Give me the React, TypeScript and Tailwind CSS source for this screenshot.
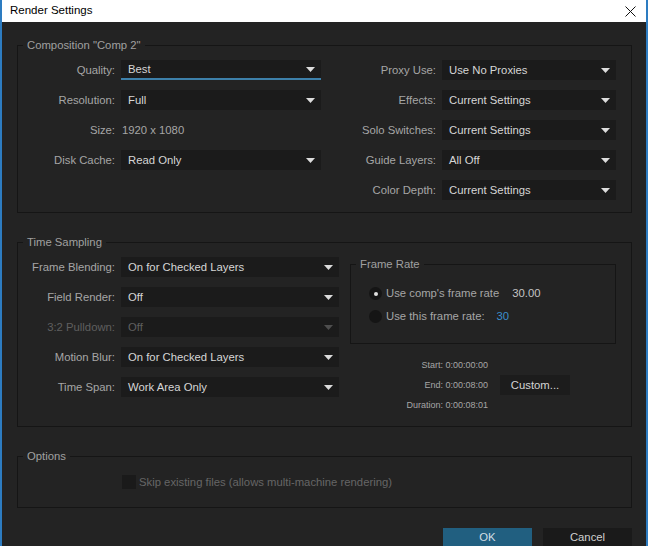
import React from 'react';

const FONT = { fontFamily: '"Liberation Sans", Arial, sans-serif' };

function Arrow({ dim }: { dim?: boolean }) {
  return (
    <svg width="9" height="5" viewBox="0 0 9 5" className="shrink-0">
      <path d="M0 0 H9 L4.5 5 Z" fill={dim ? '#4e4e4e' : '#dcdcdc'} />
    </svg>
  );
}

function Select({
  value,
  width,
  focused,
  disabled,
}: {
  value: string;
  width: string;
  focused?: boolean;
  disabled?: boolean;
}) {
  return (
    <div
      className={`${width} h-[20px] bg-[#1b1b1b] flex items-center justify-between pl-[7px] pr-[6px] ${
        focused ? 'border-b-2 border-[#3d80aa]' : ''
      }`}
    >
      <span className={disabled ? 'text-[#5f5f5f]' : 'text-[#d6d6d6]'}>{value}</span>
      <Arrow dim={disabled} />
    </div>
  );
}

function Row({
  label,
  labelW,
  children,
  disabled,
}: {
  label: string;
  labelW: string;
  children: React.ReactNode;
  disabled?: boolean;
}) {
  return (
    <div className="h-[20px] flex items-center gap-[6px]">
      <div className={`${labelW} text-right ${disabled ? 'text-[#5f5f5f]' : 'text-[#a6a6a6]'}`}>{label}</div>
      {children}
    </div>
  );
}

function Group({ title, className, children }: { title: string; className?: string; children: React.ReactNode }) {
  return (
    <fieldset className={`border border-[#151515] ${className ?? ''}`}>
      <legend className="ml-[5px] px-[4px] text-[11.3px] leading-[14px] text-[#a0a0a0]">{title}</legend>
      {children}
    </fieldset>
  );
}

export default function App() {
  return (
    <div
      className="w-[648px] h-[546px] overflow-hidden bg-[#232323] border-x-2 border-[#2d7cc1] text-[11.3px]"
      style={FONT}
    >
      {/* Title bar */}
      <div className="h-[22px] bg-white flex items-center justify-between pl-[8px] pr-[10px]">
        <span className="text-[11.5px] text-black">Render Settings</span>
        <svg width="11" height="11" viewBox="0 0 11 11">
          <path d="M0.5 0.5 L10.5 10.5 M10.5 0.5 L0.5 10.5" stroke="#111" strokeWidth="1" />
        </svg>
      </div>

      <div className="pl-[15px]">
        {/* Composition */}
        <Group title={'Composition "Comp 2"'} className="mt-[16px] w-[615px] pt-[8px] pb-[12px]">
          <div className="flex">
            <div className="w-[303px] flex flex-col gap-[10px]">
              <Row label="Quality:" labelW="w-[97px]">
                <Select value="Best" width="w-[200px]" focused />
              </Row>
              <Row label="Resolution:" labelW="w-[97px]">
                <Select value="Full" width="w-[200px]" />
              </Row>
              <Row label="Size:" labelW="w-[97px]">
                <span className="text-[#a6a6a6] pl-[1px]">1920 x 1080</span>
              </Row>
              <Row label="Disk Cache:" labelW="w-[97px]">
                <Select value="Read Only" width="w-[200px]" />
              </Row>
            </div>
            <div className="flex flex-col gap-[10px]">
              <Row label="Proxy Use:" labelW="w-[115px]">
                <Select value="Use No Proxies" width="w-[174px]" />
              </Row>
              <Row label="Effects:" labelW="w-[115px]">
                <Select value="Current Settings" width="w-[174px]" />
              </Row>
              <Row label="Solo Switches:" labelW="w-[115px]">
                <Select value="Current Settings" width="w-[174px]" />
              </Row>
              <Row label="Guide Layers:" labelW="w-[115px]">
                <Select value="All Off" width="w-[174px]" />
              </Row>
              <Row label="Color Depth:" labelW="w-[115px]">
                <Select value="Current Settings" width="w-[174px]" />
              </Row>
            </div>
          </div>
        </Group>

        {/* Time Sampling */}
        <Group title="Time Sampling" className="mt-[22px] w-[615px] pt-[8px] pb-[11px]">
          <div className="flex">
            <div className="w-[321px] flex flex-col gap-[10px]">
              <Row label="Frame Blending:" labelW="w-[97px]">
                <Select value="On for Checked Layers" width="w-[218px]" />
              </Row>
              <Row label="Field Render:" labelW="w-[97px]">
                <Select value="Off" width="w-[218px]" />
              </Row>
              <Row label="3:2 Pulldown:" labelW="w-[97px]" disabled>
                <Select value="Off" width="w-[218px]" disabled />
              </Row>
              <Row label="Motion Blur:" labelW="w-[97px]">
                <Select value="On for Checked Layers" width="w-[218px]" />
              </Row>
              <Row label="Time Span:" labelW="w-[97px]">
                <Select value="Work Area Only" width="w-[218px]" />
              </Row>
            </div>

            <div className="ml-[11px] flex flex-col">
              <Group title="Frame Rate" className="w-[266px] h-[87px]">
                <div className="pl-[18px] pt-[16px] flex flex-col gap-[10px]">
                  <div className="h-[13px] flex items-center">
                    <span className="w-[13px] h-[13px] rounded-full bg-[#151515] flex items-center justify-center">
                      <span className="w-[4px] h-[4px] rounded-full bg-[#e0e0e0]" />
                    </span>
                    <span className="ml-[4px] text-[#a6a6a6]">Use comp's frame rate</span>
                    <span className="ml-[13px] text-[#c4c4c4]">30.00</span>
                  </div>
                  <div className="h-[13px] flex items-center">
                    <span className="w-[13px] h-[13px] rounded-full bg-[#151515]" />
                    <span className="ml-[4px] text-[#a6a6a6]">Use this frame rate:</span>
                    <span className="ml-[12px] text-[#3b8fcc]">30</span>
                  </div>
                </div>
              </Group>

              <div className="mt-[11px] flex items-center">
                <div className="w-[138px] flex flex-col text-[9px] leading-[20px] text-right text-[#a6a6a6]">
                  <span>Start: 0:00:00:00</span>
                  <span>End: 0:00:08:00</span>
                  <span>Duration: 0:00:08:01</span>
                </div>
                <div className="ml-[12px] w-[70px] h-[20px] bg-[#1c1c1c] flex items-center justify-center text-[#d4d4d4]">
                  Custom...
                </div>
              </div>
            </div>
          </div>
        </Group>

        {/* Options */}
        <Group title="Options" className="mt-[22px] w-[615px]">
          <div className="pl-[104px] pt-[11px] pb-[16px] flex items-center">
            <span className="w-[14px] h-[14px] bg-[#1a1a1a]" />
            <span className="ml-[3px] text-[#666666]">Skip existing files (allows multi-machine rendering)</span>
          </div>
        </Group>

        {/* Buttons */}
        <div className="w-[615px] mt-[20px] flex justify-end gap-[11px]">
          <div className="w-[89px] h-[20px] bg-[#215f80] flex items-center justify-center text-[#d2dde4]">OK</div>
          <div className="w-[89px] h-[20px] bg-[#1a1a1a] flex items-center justify-center text-[#d0d0d0]">
            Cancel
          </div>
        </div>
      </div>
    </div>
  );
}
